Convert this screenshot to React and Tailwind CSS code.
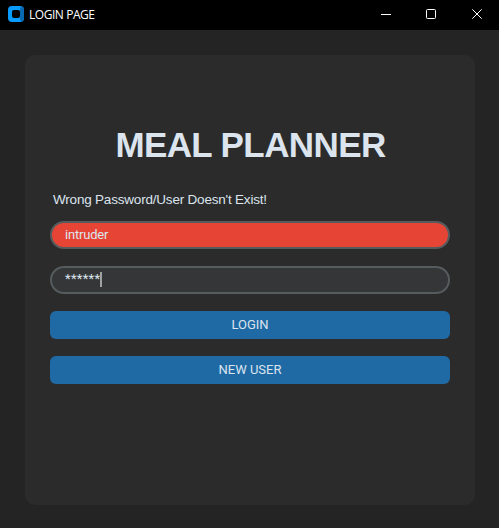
function AppIcon() {
  return (
    <svg width="16" height="16" viewBox="0 0 16 16">
      <rect width="16" height="16" rx="4" fill="#0a9bff" />
      <path d="M12 4V3l1-3a4 4 0 0 1 3 4v8a4 4 0 0 1-3 4l-1-3z" fill="#0868b0" />
      <rect x="4" y="4" width="8" height="8" rx="2" fill="#000" />
    </svg>
  );
}

function TitleBar() {
  return (
    <header className="flex h-[30px] items-center bg-black pb-[2px] pl-2 text-white">
      <AppIcon />
      <h1 className="ml-[5px] flex-1 pt-px font-['Open_Sans',sans-serif] text-[12px] leading-4 tracking-[-0.45px]">LOGIN PAGE</h1>
      <button className="flex h-full w-[46px] items-center justify-center" aria-label="Minimize">
        <svg width="10" height="10" shapeRendering="crispEdges"><path d="M0 5h10v1H0z" fill="#fff" /></svg>
      </button>
      <button className="flex h-full w-[44px] items-center justify-center" aria-label="Maximize">
        <svg width="10" height="10"><rect x=".5" y=".5" width="9" height="9" rx="1" fill="none" stroke="#fff" /></svg>
      </button>
      <button className="flex h-full w-[46px] items-center justify-center pl-[2px]" aria-label="Close">
        <svg width="10" height="10"><path d="M.3.3l9.4 9.4M9.7.3L.3 9.7" stroke="#fff" /></svg>
      </button>
    </header>
  );
}

function ActionButton({ children }) {
  return (
    <button className="mt-[17px] block h-7 w-full rounded-[6px] bg-[#1f6aa5] text-center text-[13px] leading-7 text-[#dce4ee]">
      {children}
    </button>
  );
}

export default function App() {
  return (
    <div className="flex h-[528px] w-[499px] flex-col overflow-hidden bg-[#242424] font-[Roboto,sans-serif]">
      <TitleBar />
      <main className="mx-[25px] mt-[25px] h-[450px] w-[450px] rounded-[10px] bg-[#2b2b2b] px-[25px] pt-[70px]">
        <h2 className="h-10 whitespace-nowrap pl-px text-center font-['Liberation_Sans',Arial,sans-serif] text-[35px] leading-10 font-bold tracking-[-0.6px] text-[#dce4ee]">
          MEAL PLANNER
        </h2>
        <p className="mt-[25px] h-5 pl-[3px] font-['Liberation_Sans',Arial,sans-serif] text-[13.5px] leading-5 tracking-[-0.2px] text-[#dce4ee]">
          Wrong Password/User Doesn't Exist!
        </p>
        <div className="mt-[11px] flex h-7 items-center rounded-full border-2 border-[#565b5e] bg-[#e64435] pl-[13px] text-[13px] tracking-[-0.2px] text-[#dce4ee]">
          intruder
        </div>
        <div className="mt-[17px] flex h-7 items-center rounded-full border-2 border-[#565b5e] bg-[#343638] pl-[13px] text-[13px] text-[#dce4ee]">
          <span className="w-[35px] pb-[2px] tracking-[0.3px]">******</span>
          <span className="mb-px h-[15px] w-[2px] bg-[#a0a2a4]" />
        </div>
        <ActionButton>LOGIN</ActionButton>
        <ActionButton>NEW USER</ActionButton>
      </main>
    </div>
  );
}
